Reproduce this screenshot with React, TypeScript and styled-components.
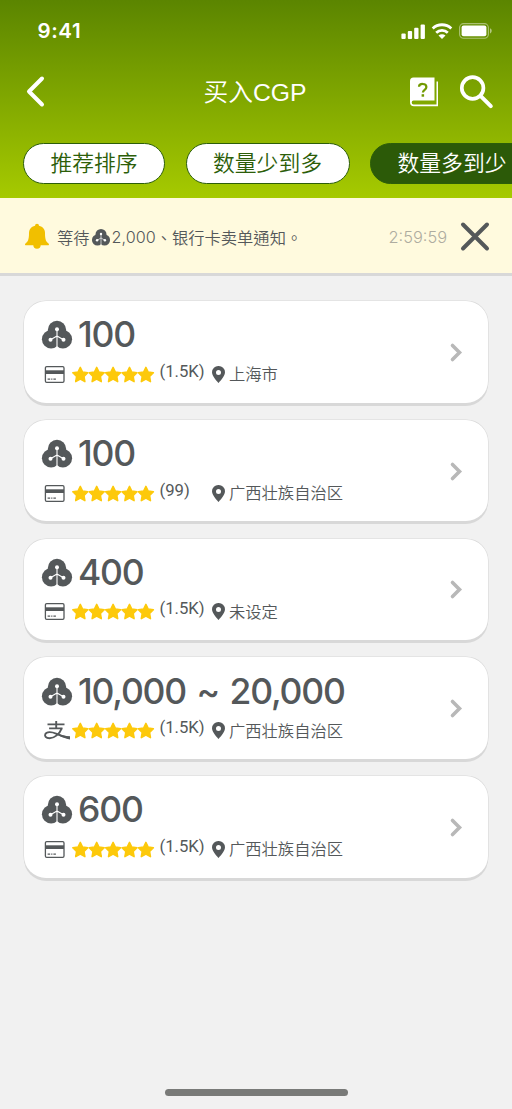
import React from "react";
import styled, { createGlobalStyle } from "styled-components";

const GlobalStyle = createGlobalStyle`
  * { box-sizing: border-box; }
  body {
    margin: 0;
    background: #f1f1f1;
    overflow: hidden;
    font-family: "Liberation Sans", "Noto Sans CJK TC", sans-serif;
  }
  svg { display: block; flex: none; overflow: visible; }
`;

const Screen = styled.div`
  width: 512px;
  height: 1109px;
  overflow: hidden;
  display: flex;
  flex-direction: column;
  background: #f1f1f1;
  color: #54585a;
`;

const Header = styled.header`
  height: 198px;
  flex: none;
  background: linear-gradient(#5b8500, #a6ca00);
  color: #fff;
`;

const StatusBar = styled.div`
  height: 62px;
  display: flex;
  align-items: center;
  justify-content: space-between;
  padding: 0 20px 0 37.5px;
`;

const Clock = styled.span`
  font: 600 20.5px/24px Inter, sans-serif;
  letter-spacing: 0.6px;
`;

const StatusIcons = styled.div`
  display: flex;
  align-items: center;
  gap: 6px;
`;

const NavBar = styled.div`
  height: 60px;
  display: flex;
  align-items: center;
  padding: 0 19px 0 26px;
`;

const Title = styled.h1`
  flex: 1;
  margin: 0;
  padding: 1px 0 0 55px;
  text-align: center;
  font-size: 24.7px;
  line-height: 36px;
  font-weight: 350;
  font-family: "Liberation Sans", "Noto Sans CJK SC", sans-serif;
`;

const NavActions = styled.div`
  display: flex;
  align-items: center;
  gap: 22px;
`;

const Filters = styled.div`
  display: flex;
  gap: 20.5px;
  padding: 21px 0 0 23px;
`;

const Chip = styled.button<{ $width: number; $active?: boolean }>`
  flex: none;
  width: ${(p) => p.$width}px;
  height: 41px;
  padding: 0 0 3px;
  border: 1.5px solid #2c5e09;
  border-radius: 21px;
  background: ${(p) => (p.$active ? "#2c5a08" : "#fff")};
  color: ${(p) => (p.$active ? "#fff" : "#2c5e09")};
  font: 350 21.8px/32px "Noto Sans CJK SC", sans-serif;
  white-space: nowrap;
`;

const Notice = styled.div`
  height: 78px;
  flex: none;
  display: flex;
  align-items: center;
  padding: 0 22px 0 25px;
  background: #fffade;
  border-bottom: 3px solid #d8d8d8;
`;

const NoticeText = styled.div`
  flex: 1;
  display: flex;
  align-items: center;
  margin-left: 8px;
  padding-top: 2px;
  font: 350 16.3px/24px "Noto Sans CJK TC", sans-serif;
  white-space: nowrap;
  svg { margin: 1px 2px 0 2px; }
`;

const NoticeAmount = styled.span`
  font: 300 16.2px/24px Inter, sans-serif;
`;

const Countdown = styled.span`
  margin-right: 14px;
  padding-top: 2px;
  color: #aeaca0;
  font: 300 16.4px/24px Inter, sans-serif;
`;

const List = styled.main`
  display: flex;
  flex-direction: column;
  gap: 17.25px;
  padding: 25px 24px 0;
`;

const Card = styled.article`
  height: 101.5px;
  display: flex;
  align-items: center;
  justify-content: space-between;
  padding: 1px 26px 0 18px;
  border-radius: 22px;
  background: #fff;
  box-shadow: 0 0 0 0.6px #d8d8d8, 0 3px 0 0 #d8d8d8;
`;

const Offer = styled.div`
  height: 102px;
  padding-top: 14px;
`;

const AmountRow = styled.div`
  display: flex;
  align-items: center;
  gap: 6px;
  height: 40px;
`;

const Amount = styled.strong`
  font: 500 35.5px/40px Inter, sans-serif;
  letter-spacing: -1.2px;
  word-spacing: 2.2px;
  white-space: pre;
`;

const DetailRow = styled.div`
  display: flex;
  align-items: center;
  height: 28px;
  margin-top: 5px;
`;

const Payment = styled.div`
  width: 29.5px;
  padding-left: 3px;
`;

const Reviews = styled.span`
  width: 52.5px;
  margin-left: 5px;
  padding-bottom: 5px;
  font: 400 16.7px/24px Roboto, sans-serif;
  white-space: nowrap;
`;

const Region = styled.span`
  margin-left: 4px;
  padding-bottom: 2px;
  font: 350 16.3px/24px "Noto Sans CJK SC", sans-serif;
`;

const HomeIndicator = styled.div`
  width: 183px;
  height: 7px;
  margin: auto auto 13px;
  border-radius: 4px;
  background: #797a78;
`;

const Coin = ({ width = 30 }: { width?: number }) => (
  <svg width={width} height={(width * 28) / 30} viewBox="0 0 30 28">
    <g fill="#54585a">
      <circle cx="15" cy="9" r="9.2" />
      <circle cx="9.1" cy="18.3" r="9.2" />
      <circle cx="20.9" cy="18.3" r="9.2" />
    </g>
    <path d="M15 9V28M15 15L8.5 18.8M15 15L21.5 18.8" stroke="#fff" strokeWidth="1.1" />
    <g fill="#fff">
      <circle cx="15" cy="8.3" r="2" />
      <circle cx="8.5" cy="18.8" r="2" />
      <circle cx="21.5" cy="18.8" r="2" />
    </g>
  </svg>
);

const Signal = () => (
  <svg width="24" height="16" viewBox="0 0 24 16" fill="#fff">
    <rect x="-.6" y="10.500" width="4.300" height="5.500" rx="1" />
    <rect x="5.800" y="8" width="4.300" height="8" rx="1" />
    <rect x="12.200" y="4.800" width="4.300" height="11.200" rx="1" />
    <rect x="18.600" y="1.500" width="4.300" height="14.500" rx="1" />
  </svg>
);

const Wifi = () => (
  <svg width="21" height="16" viewBox="0 0 21 16" fill="none" stroke="#fff" strokeWidth="2.8">
    <path d="M.7 5.400C5.900.5 14.100.5 19.300 5.400M4.200 9.700C7.500 6.600 12.500 6.600 15.800 9.700" />
    <path d="M10 16L6.500 12.500c2-1.800 5-1.800 7 0z" fill="#fff" stroke="none" />
  </svg>
);

const Battery = () => (
  <svg width="33" height="16" viewBox="0 0 33 16">
    <rect x=".6" y=".6" width="28.8" height="14.6" rx="4" fill="none" stroke="#fff" strokeOpacity=".45" strokeWidth="1.1" />
    <rect x="2.6" y="2.6" width="24.8" height="10.6" rx="2" fill="#fff" />
    <path d="M31 5.300c2.300.8 2.300 4.300 0 5.100z" fill="#fff" fillOpacity=".5" />
  </svg>
);

const Back = () => (
  <svg width="19" height="32" viewBox="0 0 19 32" fill="none" stroke="#fff" strokeWidth="4" strokeLinecap="round" strokeLinejoin="round">
    <path d="M16 2.500L3 15.500l13 13" />
  </svg>
);

const HelpBook = () => (
  <svg width="28" height="29" viewBox="0 0 28 29">
    <path d="M3.500 -.5H24.500V22.500H3.500Q1.700 22.500 1.700 24.500t1.800 2H26.500V3.500H28V28.300H4Q0 28.300 0 24V3Q0 -.5 3.500 -.5Z" fill="#fff" />
    <path d="M9 8.700C9.200 5.100 16.400 4.900 16.400 9.100c0 2.900-3.500 2.700-3.500 5.500" fill="none" stroke="#719900" strokeWidth="2.200" />
    <rect x="11.600" y="16.200" width="2.500" height="2.500" fill="#719900" />
  </svg>
);

const Search = () => (
  <svg width="33" height="33" viewBox="0 0 33 33" fill="none" stroke="#fff" strokeLinecap="round">
    <circle cx="12.600" cy="12" r="10.800" strokeWidth="3.700" />
    <path d="M21 20.400l9.800 9.800" strokeWidth="4" />
  </svg>
);

const Bell = () => (
  <svg width="24" height="26" viewBox="0 0 24 26" fill="#f1bf00">
    <path d="M10 2.700a2 2 0 0 1 4 0C18 3.500 20 6.500 20 10c0 7 1.200 8.500 3.500 10.500.9.800.5 1.800-.6 1.800H1.100c-1.100 0-1.500-1-.6-1.800C2.800 18.500 4 17 4 10 4 6.500 6 3.500 10 2.700z" />
    <path d="M8.300 22h7.400a3.700 3.700 0 0 1-7.400 0z" />
  </svg>
);

const Close = () => (
  <svg width="29" height="28" viewBox="0 0 29 28" fill="none" stroke="#54585a" strokeWidth="4" strokeLinecap="round">
    <path d="M2 2.500L26 26.500M26 2.500L2 26.500" />
  </svg>
);

const BankCard = () => (
  <svg width="20" height="17" viewBox="0 0 20 17">
    <rect x=".4" y=".7" width="18.600" height="15.600" rx="1.300" fill="none" stroke="#54585a" strokeWidth="1.300" />
    <path d="M.4 4.300H19v3.700H.4z" fill="#54585a" />
    <path d="M2.600 13.200h2.600M6.200 13.200h1.200M8.400 13.200h2.500" stroke="#54585a" strokeWidth="1.200" />
  </svg>
);

const Alipay = () => (
  <svg width="26" height="19" viewBox="0 0 26 19" fill="none" stroke="#54585a">
    <path d="M2.500 3.400H19.500M11.200 0V7.300M4.100 7.400H17.500" strokeWidth="1.900" />
    <path d="M16.700 7.300C14.500 13 9.700 17.200 4.500 17.200.7 17.200-.5 15 .3 13.200 1.500 10.500 6.500 10.600 11 12.600 15 14.500 19 16 24.600 16.800" strokeWidth="1.900" />
    <path d="M14 13C17.500 14.800 21 15.200 25 15.300V18.600C20.500 17.800 17 16.300 13.300 14.300z" fill="#54585a" stroke="none" />
  </svg>
);

const starPath =
  "M8.300 1l2.300 4.700 5.200.8-3.800 3.700.9 5.200-4.600-2.500-4.600 2.500.9-5.200L.8 6.500 6 5.700z";

const Stars = () => (
  <svg width="83" height="17" viewBox="0 0 83 17" fill="#fdc90b" stroke="#fdc90b" strokeWidth="1.500" strokeLinejoin="round">
    {[0, 1, 2, 3, 4].map((i) => (
      <path key={i} d={starPath} transform={`translate(${i * 16.4} .3)`} />
    ))}
  </svg>
);

const Pin = () => (
  <svg width="13" height="17" viewBox="0 0 13 17">
    <path fillRule="evenodd" d="M6.500 0A6.300 6.300 0 0 1 13 6.300C13 10.500 6.500 17 6.500 17S0 10.500 0 6.300A6.300 6.300 0 0 1 6.500 0zm0 3.900a2.500 2.500 0 1 0 0 5 2.500 2.500 0 0 0 0-5z" fill="#54585a" />
  </svg>
);

const Arrow = () => (
  <svg width="12" height="19" viewBox="0 0 12 19" fill="none" stroke="#b8b8b8" strokeWidth="3.600" strokeLinecap="round">
    <path d="M2.500 2.500L9.500 9.500l-7 7" />
  </svg>
);

const offers = [
  { amount: "100", pay: "card", reviews: "(1.5K)", region: "上海市" },
  { amount: "100", pay: "card", reviews: "(99)", region: "广西壮族自治区" },
  { amount: "400", pay: "card", reviews: "(1.5K)", region: "未设定" },
  { amount: "10,000 ~ 20,000", pay: "alipay", reviews: "(1.5K)", region: "广西壮族自治区" },
  { amount: "600", pay: "card", reviews: "(1.5K)", region: "广西壮族自治区" },
];

export default function App() {
  return (
    <Screen>
      <GlobalStyle />
      <Header>
        <StatusBar>
          <Clock>9:41</Clock>
          <StatusIcons>
            <Signal />
            <Wifi />
            <Battery />
          </StatusIcons>
        </StatusBar>
        <NavBar>
          <Back />
          <Title>买入CGP</Title>
          <NavActions>
            <HelpBook />
            <Search />
          </NavActions>
        </NavBar>
        <Filters>
          <Chip $width={142}>推荐排序</Chip>
          <Chip $width={164}>数量少到多</Chip>
          <Chip $width={164} $active>数量多到少</Chip>
        </Filters>
      </Header>
      <Notice>
        <Bell />
        <NoticeText>
          等待
          <Coin width={18} />
          <NoticeAmount>2,000</NoticeAmount>、银行卡卖单通知。
        </NoticeText>
        <Countdown>2:59:59</Countdown>
        <Close />
      </Notice>
      <List>
        {offers.map((offer, i) => (
          <Card key={i}>
            <Offer>
              <AmountRow>
                <Coin />
                <Amount>{offer.amount}</Amount>
              </AmountRow>
              <DetailRow>
                <Payment>{offer.pay === "card" ? <BankCard /> : <Alipay />}</Payment>
                <Stars />
                <Reviews>{offer.reviews}</Reviews>
                <Pin />
                <Region>{offer.region}</Region>
              </DetailRow>
            </Offer>
            <Arrow />
          </Card>
        ))}
      </List>
      <HomeIndicator />
    </Screen>
  );
}
